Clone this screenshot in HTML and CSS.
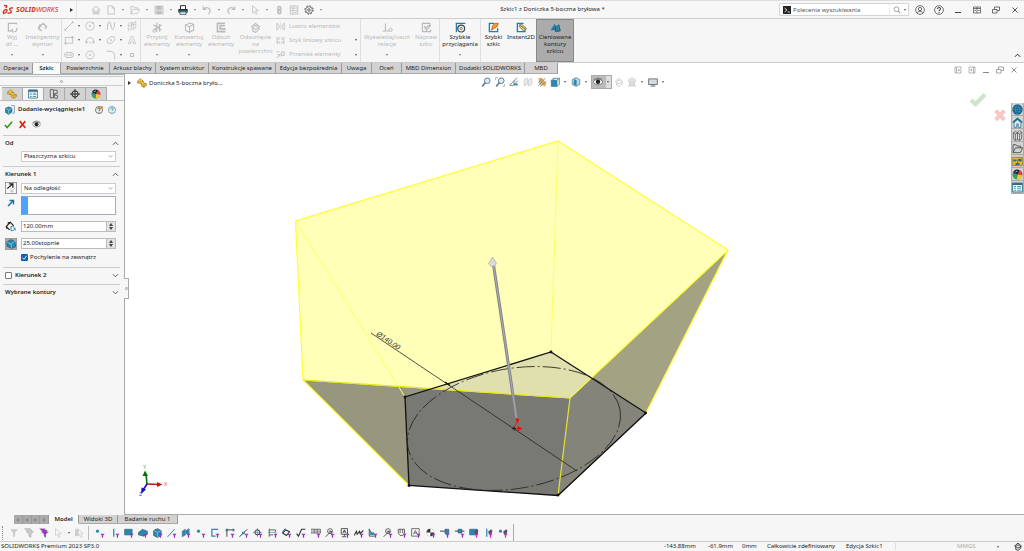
FILE: index.html
```html
<!DOCTYPE html>
<html lang="pl">
<head>
<meta charset="utf-8">
<title>Szkic1 z Doniczka 5-boczna bryłowa</title>
<link rel="stylesheet" href="styles.css">
</head>
<body>
<svg class="defs" aria-hidden="true">
  <defs>
    <symbol id="home" viewBox="0 0 16 16"><path d="M1 8l7-6 7 6M3.500 7v7.500h3.500v-4h2v4h3.500V7M5 7v6M11 7v6" fill="none" stroke="currentColor" stroke-width="1.300"/></symbol>
    <symbol id="page" viewBox="0 0 16 16"><path d="M3 1.500h7l3.500 3.500v9.500H3zM10 1.500V5h3.500" fill="none" stroke="currentColor" stroke-width="1.300"/></symbol>
    <symbol id="folder" viewBox="0 0 16 16"><path d="M1.500 14V2.500h4.500l1.500 2h5V7M1.500 14L5 7h10.500L12 14z" fill="none" stroke="currentColor" stroke-width="1.200"/></symbol>
    <symbol id="save" viewBox="0 0 16 16"><path d="M1.500 1.500h13v13h-13z" fill="#ddd" stroke="currentColor"/><path d="M4 1.500h8v6H4zM4 10h8v4.500H4z" fill="currentColor"/></symbol>
    <symbol id="print" viewBox="0 0 16 16"><path d="M4 7V1h8v6" fill="#fff" stroke="#222" stroke-width="1.500"/><path d="M.5 6.500h15V12H.5z" fill="#222"/><path d="M2 9h12v3H2z" fill="#2c9bc4"/><path d="M3 11h10v4H3z" fill="#dff0f8" stroke="#222"/></symbol>
    <symbol id="undo" viewBox="0 0 16 16"><path d="M2 2v5h5M2 7c3-4 11-4 11 3 0 2-1 3-3 4" fill="none" stroke="currentColor" stroke-width="1.800"/></symbol>
    <symbol id="redo" viewBox="0 0 16 16"><path d="M14 2v5H9M14 7C11 3 3 3 3 10c0 2 1 3 3 4" fill="none" stroke="currentColor" stroke-width="1.800"/></symbol>
    <symbol id="cursor" viewBox="0 0 16 16"><path d="M4 1v12l3-3 2.500 5 2-1L9 9h4.500z" fill="none" stroke="currentColor" stroke-width="1.200"/></symbol>
    <symbol id="rebuild" viewBox="0 0 16 16"><rect x="5" y="1" width="7" height="14" rx="3.500" fill="currentColor"/><circle cx="8.500" cy="5" r="1.700" fill="#ddd"/><circle cx="8.500" cy="11" r="1.700" fill="#ddd"/></symbol>
    <symbol id="props" viewBox="0 0 16 16"><path d="M2 1.500h12v13H2zM6.500 1.500v13M2 5h12M2 9h12M9 12h3" fill="none" stroke="currentColor" stroke-width="1.300"/></symbol>
    <symbol id="gear" viewBox="0 0 16 16"><circle cx="8" cy="8" r="6.600" fill="none" stroke="currentColor" stroke-width="1.600" stroke-dasharray="2.600 2.580"/><circle cx="8" cy="8" r="5.300" fill="none" stroke="currentColor"/><circle cx="8" cy="8" r="2" fill="none" stroke="currentColor" stroke-width="1.300"/></symbol>
    <symbol id="lens" viewBox="0 0 16 16"><circle cx="7" cy="6.500" r="4.800" fill="none" stroke="currentColor" stroke-width="1.300"/><path d="M10.500 10l4 4.500" stroke="currentColor" stroke-width="2"/></symbol>
    <symbol id="user" viewBox="0 0 16 16"><g fill="none" stroke="currentColor" stroke-width="1.200"><circle cx="8" cy="8" r="7"/><circle cx="8" cy="6.500" r="2.700"/><path d="M3.500 13c1-4 8-4 9 0"/></g></symbol>
    <symbol id="help" viewBox="0 0 16 16"><g fill="none" stroke="currentColor" stroke-width="1.200"><circle cx="8" cy="8" r="7"/><path d="M5.500 6.500c0-3.500 5-3 5-.5 0 2-2.500 1.500-2.500 4M8 11.500v1.500" stroke-width="1.700"/></g></symbol>
    <symbol id="min" viewBox="0 0 16 16"><path d="M2 13h12" stroke="currentColor" stroke-width="2"/></symbol>
    <symbol id="span" viewBox="0 0 16 16"><path d="M1 2h14v12H1zM8 2v12M1 5h14M3 9h3M10 9h3" fill="none" stroke="currentColor" stroke-width="1.400"/></symbol>
    <symbol id="restore" viewBox="0 0 16 16"><path d="M1 7h9v7H1zM5 7V2h10v7h-5" fill="none" stroke="currentColor" stroke-width="1.500"/></symbol>
    <symbol id="close" viewBox="0 0 16 16"><path d="M3 3l10 10M13 3L3 13" stroke="currentColor" stroke-width="1.800"/></symbol>
    <symbol id="up" viewBox="0 0 16 16"><path d="M2 11l6-6 6 6" fill="none" stroke="currentColor" stroke-width="2.200"/></symbol>
    <symbol id="down" viewBox="0 0 16 16"><path d="M2 5l6 6 6-6" fill="none" stroke="currentColor" stroke-width="2.200"/></symbol>
    <symbol id="exit" viewBox="0 0 16 16"><path d="M14 3.500V2H2v11h6M11 14.500c3-1 4-3 3-6M8 10l-1 3 3 2" fill="none" stroke="currentColor" stroke-width="1.800"/></symbol>
    <symbol id="dim" viewBox="0 0 16 16"><path d="M2 9l7-7 5 5-3 3M2 9l3 3M5 3.500L2 9l5 4" fill="none" stroke="currentColor" stroke-width="2"/></symbol>
    <symbol id="line" viewBox="0 0 16 16"><path d="M2 14L14 2" stroke="currentColor" stroke-width="1.300"/><circle cx="2" cy="14" r="1.500" fill="currentColor"/><circle cx="14" cy="2" r="1.500" fill="currentColor"/></symbol>
    <symbol id="circ" viewBox="0 0 16 16"><circle cx="8" cy="8" r="6.500" fill="none" stroke="currentColor" stroke-width="1.200"/><circle cx="8" cy="8" r="1.500" fill="currentColor"/><circle cx="13" cy="3" r="1.500" fill="currentColor"/></symbol>
    <symbol id="spline" viewBox="0 0 16 16"><path d="M2 14C3-4 7 0 8 8s5 8 6-6" fill="none" stroke="currentColor" stroke-width="1.500"/></symbol>
    <symbol id="plane" viewBox="0 0 16 16"><path d="M2 4l5-2v10l-5 3zM7 4l7-3v10l-7 3M2 8l12-3M10 2v11" fill="none" stroke="currentColor"/></symbol>
    <symbol id="rect" viewBox="0 0 16 16"><path d="M2 4h12v9H2z" fill="none" stroke="currentColor" stroke-width="1.300"/><path d="M1 12h3v3H1zM12 2h3v3h-3z" fill="currentColor"/></symbol>
    <symbol id="arc" viewBox="0 0 16 16"><path d="M2 11C1 2 15 2 14 11" fill="none" stroke="currentColor" stroke-width="1.400"/><path d="M1 10h3v3H1zM12 10h3v3h-3zM7 11h2v2H7z" fill="currentColor"/></symbol>
    <symbol id="ellipse" viewBox="0 0 16 16"><ellipse cx="8" cy="8" rx="7" ry="4.500" transform="rotate(-40 8 8)" fill="none" stroke="currentColor" stroke-width="1.200"/><circle cx="8" cy="8" r="1.400" fill="currentColor"/></symbol>
    <symbol id="letter" viewBox="0 0 16 16"><path d="M2 14L7 2h2l5 12h-3l-1-3H6l-1 3zM7 8h2" fill="none" stroke="currentColor"/></symbol>
    <symbol id="slot" viewBox="0 0 16 16"><rect x="1" y="4" width="14" height="8" rx="4" fill="none" stroke="currentColor" stroke-width="1.400"/><path d="M5 6v4M11 6v4M4 8h8" stroke="currentColor"/></symbol>
    <symbol id="poly" viewBox="0 0 16 16"><path d="M4.500 2h7L15 8l-3.500 6h-7L1 8z" fill="none" stroke="currentColor" stroke-width="1.200"/><circle cx="8" cy="8" r="1.500" fill="currentColor"/></symbol>
    <symbol id="fillet" viewBox="0 0 16 16"><path d="M1 2h5c5 0 8 3 8 8v5" fill="none" stroke="currentColor" stroke-width="1.400"/></symbol>
    <symbol id="point" viewBox="0 0 16 16"><path d="M5.500 5.500h5v5h-5z" fill="none" stroke="currentColor" stroke-width="1.600"/></symbol>
    <symbol id="trim" viewBox="0 0 16 16"><path d="M2 4l12 8M14 4L2 12M7 1v14M11 3v11" stroke="currentColor" stroke-width="1.600"/><circle cx="3" cy="13" r="2" fill="none" stroke="currentColor"/></symbol>
    <symbol id="cube" viewBox="0 0 16 16"><path d="M2 4.500L9 1.500l5 2v8.500l-6 3-6-3zM2 4.500l6 2.500v8M8 7l6-3.500" fill="none" stroke="currentColor" stroke-width="1.500"/></symbol>
    <symbol id="offset" viewBox="0 0 16 16"><path d="M13 2H2v12h12M13 5.500H6V10h8" fill="none" stroke="currentColor" stroke-width="2.200"/></symbol>
    <symbol id="surf" viewBox="0 0 16 16"><path d="M2 7l6-5 6 5-6 4zM4 9v4l4 2 5-4V8M5 7l3-2 3 2" fill="none" stroke="currentColor" stroke-width="1.500"/></symbol>
    <symbol id="mirror" viewBox="0 0 16 16"><path d="M1.500 2v12l4-4V6zM14.500 2v12l-4-4V6z" fill="none" stroke="currentColor" stroke-width="1.400"/><path d="M8 1v14" stroke="currentColor" stroke-dasharray="2 1.500"/></symbol>
    <symbol id="pattern" viewBox="0 0 16 16"><path d="M2 2l5 5M7 2L2 7M9 2l5 5M14 2L9 7M2 9l5 5M7 9l-5 5M9 9l5 5M14 9l-5 5M2 2v12M14 2v12" fill="none" stroke="currentColor" stroke-width="1.300"/></symbol>
    <symbol id="scene" viewBox="0 0 16 16"><path d="M2 7c1-7 11-7 12 0l-2 2v5H4V9zM1 14h14M5 7h6v4H5z" fill="#e8e8e8" stroke="currentColor" stroke-width="1.300"/></symbol>
    <symbol id="move" viewBox="0 0 16 16"><path d="M1 14l6-6M3 8h4v4M9.500 3.500h5v6h-5zM1 3h5" fill="none" stroke="currentColor" stroke-width="1.500"/></symbol>
    <symbol id="relation" viewBox="0 0 16 16"><path d="M5 2v11M1 13h9" fill="none" stroke="currentColor" stroke-width="1.600"/><circle cx="12.500" cy="11.500" r="2.300" fill="none" stroke="currentColor" stroke-width="1.400"/></symbol>
    <symbol id="repair" viewBox="0 0 16 16"><path d="M13 6V2H2v12h12v-3M5 10l8-6M5 6l3 6 6-7" fill="none" stroke="currentColor" stroke-width="1.700"/></symbol>
    <symbol id="snap" viewBox="0 0 16 16"><circle cx="9" cy="9.500" r="5" fill="none" stroke="#3c4348" stroke-width="1.700"/><circle cx="9" cy="9.500" r="1.800" fill="none" stroke="#3c4348"/><path d="M1 2h14M2 2v13" stroke="#247fa8" stroke-width="1.800"/></symbol>
    <symbol id="rapid" viewBox="0 0 16 16"><path d="M9 2H2v12h12V9" fill="none" stroke="#247fa8" stroke-width="2"/><path d="M5 12l2-7 3-3h5l-2 5-4 2z" fill="#f49b24" stroke="#b34117"/></symbol>
    <symbol id="instant" viewBox="0 0 16 16"><path d="M11 2H2v12h12" fill="none" stroke="#247fa8" stroke-width="2"/><path d="M5 4l3-1 7 6-1 3-3 1-6-6z" fill="#f0d36a" stroke="#496069"/><path d="M6 5l8 6" stroke="#333"/></symbol>
    <symbol id="contour" viewBox="0 0 16 16"><path d="M1 12L7 2l4 10z" fill="#1c7ba7"/><path d="M8 8l5-4 2 9-7 1z" fill="#397d9c" stroke="#0d526f"/></symbol>
    <symbol id="part" viewBox="0 0 16 16"><path d="M1 5l4-4 5 4 1 3 4 1v3l-4 3-4-2V9L1 8z" fill="#f5c844" stroke="#98711c"/><path d="M1 5l4 2 5-2M7 9l4 2 4-2M11 11v4" fill="none" stroke="#98711c" stroke-width=".8"/></symbol>
    <symbol id="pm" viewBox="0 0 16 16"><path d="M1 1.500h14v13H1z" fill="#fff" stroke="#245b7a" stroke-width="1.200"/><path d="M1 3h14" stroke="#245b7a" stroke-width="2.500"/><path d="M3 6.500h3M3 9h3M3 12h3M7.500 6.500H13M7.500 9H13M7.500 12H13" stroke="#2889ad" stroke-width="1.300"/></symbol>
    <symbol id="config" viewBox="0 0 16 16"><path d="M2 1h5v13H2zM8 2h5v5H8M9 9l5 2-1 4-5-1zM7 7l3 3" fill="#ddd" stroke="#555" stroke-width="1.400"/></symbol>
    <symbol id="target" viewBox="0 0 16 16"><circle cx="8" cy="8" r="5" fill="none" stroke="#222" stroke-width="1.600"/><path d="M8 0v16M0 8h16" stroke="#222" stroke-width="1.500"/></symbol>
    <symbol id="ball" viewBox="0 0 16 16"><circle cx="8" cy="8" r="7" fill="#2862b8"/><path d="M8 8L2 4a7 7 0 0 1 9-2z" fill="#222"/><path d="M8 8l3-6a7 7 0 0 1 4 7z" fill="#e93a2c"/><path d="M8 8l7 1a7 7 0 0 1-8 6z" fill="#f3cb30"/><path d="M8 8l-1 7a7 7 0 0 1-6-8z" fill="#3ca547"/><path d="M5 4l3-1" stroke="#fff"/></symbol>
    <symbol id="extrude" viewBox="0 0 16 16"><path d="M10 1h5v12h-4" fill="none" stroke="#477d9a"/><path d="M1 5l5-2 5 2v6l-5 4-5-3z" fill="#2787b0" stroke="#174a65"/><path d="M1 5l5 3 5-3M6 8v7" fill="none" stroke="#a8ddeb"/></symbol>
    <symbol id="ok" viewBox="0 0 16 16"><path d="M1.500 9l4 4.500L14.500 3" fill="none" stroke="currentColor" stroke-width="2.800"/></symbol>
    <symbol id="x" viewBox="0 0 16 16"><path d="M3 2l10 12M13 2L3 14" fill="none" stroke="currentColor" stroke-width="2.800"/></symbol>
    <symbol id="ok-bold" viewBox="0 0 16 16"><path d="M1 9l4.500 4L15 3.500" fill="none" stroke="currentColor" stroke-width="4.200"/></symbol>
    <symbol id="x-bold" viewBox="0 0 16 16"><path d="M3 3l10 10.500M13 3L3 13.500" fill="none" stroke="currentColor" stroke-width="4.600"/></symbol>
    <symbol id="eye" viewBox="0 0 16 16"><path d="M0 8c4-6 12-6 16 0-4 6-12 6-16 0z" fill="#f5f5f5" stroke="#555"/><circle cx="8" cy="7.500" r="3.500" fill="#222"/><path d="M1 5c3-4 11-4 14 0" fill="none" stroke="#444"/></symbol>
    <symbol id="flip" viewBox="0 0 16 16"><path d="M2 9l8-7M5 1.500h6v6" fill="none" stroke="#222" stroke-width="2"/><path d="M14 8l-6 6M8 10v4h4" fill="none" stroke="#bbb" stroke-width="1.500"/></symbol>
    <symbol id="dir" viewBox="0 0 16 16"><path d="M2 14L12 4M5 3h8v8" fill="none" stroke="#167195" stroke-width="2.700"/></symbol>
    <symbol id="depth" viewBox="0 0 16 16"><path d="M1 8l6-6 5 5M1 8l5 5M4 5L1 8l1 3M7 2L3 3" fill="none" stroke="#222" stroke-width="1.600"/><path d="M8 8h2c4 0 4 6 0 6H8zM14 14v-4" fill="none" stroke="#2483a6" stroke-width="1.300"/></symbol>
    <symbol id="draft" viewBox="0 0 16 16"><path d="M1 5l7-4 6 3 2 8-7 3-7-3z" fill="#2689b2" stroke="#164e68"/><path d="M1 5l7 3 6-4M8 8l1 7" fill="none" stroke="#9bd6e9" stroke-width="1.100"/></symbol>
    <symbol id="zoomfit" viewBox="0 0 16 16"><circle cx="10" cy="6" r="4.500" fill="#d9edf6" stroke="#687f8d" stroke-width="1.600"/><path d="M7 9l-5 6" stroke="#687f8d" stroke-width="2.500"/></symbol>
    <symbol id="prev" viewBox="0 0 16 16"><path d="M13 1L5 9l-4 4 5 1 8-8M10 5L7 8l3 3" fill="none" stroke="#66828f" stroke-width="1.500"/><path d="M7 12h7" stroke="#278fb7" stroke-width="3"/></symbol>
    <symbol id="section" viewBox="0 0 16 16"><path d="M2 4l5-2v10l-5 2zM9 4l5-2v10l-5 2z" fill="#eee" stroke="#ccc" stroke-width="1.400"/></symbol>
    <symbol id="brush" viewBox="0 0 16 16"><path d="M2 2l5-1 8 9-2 5-9-4z" fill="#eda84a"/><path d="M2 14L13 2M5 15L15 7M2 9l6-6" stroke="#728e98" stroke-width="1.500"/></symbol>
    <symbol id="bluecube" viewBox="0 0 16 16"><path d="M2 5l4-3h9v10l-4 3H2z" fill="#d9e9ee" stroke="#35616d"/><path d="M2 5h9v10H2z" fill="#2689b2"/><path d="M11 5l4-3M11 5v10M6 2v5" stroke="#35616d"/></symbol>
    <symbol id="display" viewBox="0 0 16 16"><path d="M2 4l6-3 6 3v8l-6 3-6-3z" fill="#b6dae8" stroke="#44616b"/><path d="M5 3l4 2v9l-5-2z" fill="#2689b2"/></symbol>
    <symbol id="monitor" viewBox="0 0 16 16"><path d="M1 3h14v9H1z" fill="#d6dadd" stroke="#65717a" stroke-width="1.500"/><path d="M8 12v2M4 14.500h8" stroke="#65717a" stroke-width="1.600"/></symbol>
    <symbol id="dock" viewBox="0 0 16 16"><path d="M2 2h12v12H2zM5 2v12M10 6L8 8l2 2z" fill="none" stroke="currentColor" stroke-width="1.200"/></symbol>
    <symbol id="globe" viewBox="0 0 16 16"><circle cx="8" cy="8" r="7.500" fill="#16658d"/><path d="M2 4c4 2 8 2 12 0M1 8h14M3 12c3-2 7-2 10 0M8 1c-4 4-4 10 0 14M8 1c4 4 4 10 0 14" fill="none" stroke="#61acd0" stroke-width=".6"/></symbol>
    <symbol id="bluehome" viewBox="0 0 16 16"><path d="M1 8l7-6 7 6" fill="none" stroke="#186387" stroke-width="2"/><path d="M3 8l5-4 5 4v7H9v-5H7v5H3z" fill="#d6edf7" stroke="#186387"/></symbol>
    <symbol id="library" viewBox="0 0 16 16"><path d="M2 4l3-2 3 2v10l-3 1-3-2zM8 4l3-3 3 2v10l-3 2-3-1M2 4l3 2 3-2 3 2 3-3M5 6v9M11 6v9" fill="#ddd" stroke="#444"/></symbol>
    <symbol id="palette" viewBox="0 0 16 16"><path d="M1 2h14v12H1z" fill="#f4bd31" stroke="#826522"/><path d="M2 5h4v3H2zM9 4h5v4H9zM5 10h6v3H5z" fill="#316b87"/><path d="M6 6h3M8 8v2" stroke="#333"/></symbol>
    <symbol id="funnel" viewBox="0 0 16 16"><path d="M2 2h12L9.500 8v6h-3V8z" fill="currentColor"/></symbol>
    <symbol id="funnels" viewBox="0 0 16 16"><path d="M1 1h9l-1 2h4l-1 3h3l-4 4v5l-3-2v-3L4 6h2z" fill="currentColor" stroke="#888" stroke-width=".6"/></symbol>
    <symbol id="mini" viewBox="0 0 16 16"><path d="M8.500 9h7l-2.500 3v3.500h-2V12z" fill="#9a35c4"/></symbol>
    <symbol id="fpoint" viewBox="0 0 16 16"><circle cx="4" cy="5" r="2.500" fill="#2689b2"/></symbol>
    <symbol id="fedge" viewBox="0 0 16 16"><path d="M6 1v13" stroke="#2689b2" stroke-width="2"/></symbol>
    <symbol id="fface" viewBox="0 0 16 16"><path d="M1 2h12v9H1z" fill="#2689b2" stroke="#315d6d"/></symbol>
    <symbol id="fsurf" viewBox="0 0 16 16"><path d="M0 8l7-6 8 3v5l-6 3-8-2z" fill="#2689b2" stroke="#315d6d"/></symbol>
    <symbol id="fsolid" viewBox="0 0 16 16"><path d="M1 4l6-3 6 3v8l-6 3-6-3z" fill="#2689b2" stroke="#25495a"/><path d="M1 4l6 3 6-3M7 7v8" fill="none" stroke="#a7d9e8"/></symbol>
    <symbol id="faxis" viewBox="0 0 16 16"><path d="M1 14L12 2" stroke="#2689b2" stroke-width="1.600"/></symbol>
    <symbol id="fplane" viewBox="0 0 16 16"><path d="M2 5l5-3v9l-5 3zM8 4l5-3v8H8z" fill="#2689b2" stroke="#55717e"/></symbol>
    <symbol id="fsketch" viewBox="0 0 16 16"><path d="M13 2H3v11h6" fill="none" stroke="#2689b2" stroke-width="2"/></symbol>
    <symbol id="fseg" viewBox="0 0 16 16"><path d="M3 14V3h11" fill="none" stroke="#444" stroke-width="1.500"/><path d="M1 1h4v4H1zM12 1h3v4h-3z" fill="#397b91"/></symbol>
    <symbol id="fmid" viewBox="0 0 16 16"><path d="M1 14L13 2" stroke="#444" stroke-width="1.600"/><path d="M5 6h4v4H5z" fill="#2689b2"/></symbol>
    <symbol id="fcenter" viewBox="0 0 16 16"><path d="M7 0v14M0 7h14" stroke="#2689b2"/><circle cx="7" cy="7" r="4" fill="none" stroke="#333" stroke-width="1.600"/></symbol>
    <symbol id="fcl" viewBox="0 0 16 16"><path d="M2 1v13M2 3h10v3M2 11h6" fill="none" stroke="#444" stroke-width="1.300"/><path d="M0 7h14" stroke="#2689b2"/></symbol>
    <symbol id="fdim" viewBox="0 0 16 16"><path d="M1 8l5-5 6 3-5 6z" fill="none" stroke="#333" stroke-width="1.800"/><path d="M1 6l5-5" stroke="#2689b2" stroke-width="2"/></symbol>
    <symbol id="frough" viewBox="0 0 16 16"><path d="M1 9l3 4L9 2h6" fill="none" stroke="#333" stroke-width="1.800"/></symbol>
    <symbol id="fgtol" viewBox="0 0 16 16"><path d="M0 2h15v6H0zM5 2v6M10 2v6M2 5h2M6 5h3M11 5h3" fill="none" stroke="#444" stroke-width="1.200"/></symbol>
    <symbol id="fnote" viewBox="0 0 16 16"><circle cx="8" cy="5" r="4" fill="none" stroke="#444" stroke-width="1.200"/><path d="M1 14l9-9M6 5h4v4" fill="none" stroke="#444" stroke-width="1.400"/></symbol>
    <symbol id="fdatum" viewBox="0 0 16 16"><path d="M2 1h10v9H2zM7 10v3M3 14h7M4.500 8L7 3l2.500 5M5.500 6h3" fill="none" stroke="#333" stroke-width="1.300"/></symbol>
    <symbol id="fframe" viewBox="0 0 16 16"><path d="M1 1h12v12H1zM4 10l3-6 3 6M5 8h4" fill="none" stroke="#555" stroke-width="1.300"/></symbol>
    <symbol id="fweld" viewBox="0 0 16 16"><path d="M0 12l4-7 1 5 4-5 1 4 5-5" fill="none" stroke="#333" stroke-width="1.700"/></symbol>
    <symbol id="ftri" viewBox="0 0 16 16"><path d="M2 1v12h10M2 2l5 8" fill="none" stroke="#444" stroke-width="1.400"/><path d="M3 7h7v4H3z" fill="#2689b2"/></symbol>
    <symbol id="fblock" viewBox="0 0 16 16"><path d="M2 2h10v6l-3 4H5L2 8zM5 2v6M9 2v6" fill="none" stroke="#555" stroke-width="1.400"/></symbol>
    <symbol id="fcog" viewBox="0 0 16 16"><circle cx="7" cy="7" r="6" fill="#333"/><path d="M7 7V1a6 6 0 0 1 6 6zM7 7v6a6 6 0 0 1-6-6z" fill="#fff"/></symbol>
    <symbol id="froute" viewBox="0 0 16 16"><path d="M0 5h8" stroke="#333" stroke-width="1.500"/><path d="M8 2h6v7H8z" fill="#2689b2" stroke="#33505d"/></symbol>
    <symbol id="froute2" viewBox="0 0 16 16"><path d="M0 5h15" stroke="#333" stroke-width="1.500"/><path d="M5 2h6v6H5z" fill="#2689b2" stroke="#33505d"/></symbol>
    <symbol id="fmesh" viewBox="0 0 16 16"><path d="M8 6l5-4 2 2-1 5-4 1z" fill="#555"/><path d="M8.500 9h7l-2.500 3v3.500h-2V12z" fill="#e21be4"/></symbol>
  </defs>
</svg>

<header class="titlebar">
  <div class="brand">
    <svg class="brand-mark" viewBox="0 0 24 22" aria-hidden="true"><g fill="none" stroke="#dc2b25" stroke-width="2.600"><path d="M4 3c6 0 8 1 3 5M2 18c2-8 8-8 8-5s-4 6-8 6M22 8c-6-1-9 2-5 5s1 6-6 5"/></g></svg>
    <span class="brand-name"><b>SOLID</b>WORKS</span>
  </div>
  <button class="menu-arrow" aria-label="Menu"><i class="caret-right"></i></button>
  <nav class="quick" aria-label="Szybki dostęp">
    <button class="solo" aria-label="Strona główna"><svg><use href="#home"/></svg></button>
    <button aria-label="Nowy"><svg><use href="#page"/></svg><i class="caret"></i></button>
    <button aria-label="Otwórz"><svg><use href="#folder"/></svg><i class="caret"></i></button>
    <button aria-label="Zapisz"><svg><use href="#save"/></svg><i class="caret"></i></button>
    <button class="on" aria-label="Drukuj"><svg><use href="#print"/></svg><i class="caret"></i></button>
    <button aria-label="Cofnij"><svg><use href="#undo"/></svg><i class="caret"></i></button>
    <button aria-label="Ponów"><svg><use href="#redo"/></svg><i class="caret"></i></button>
    <button aria-label="Wybierz"><svg><use href="#cursor"/></svg><i class="caret"></i></button>
    <button class="solo" aria-label="Przebuduj"><svg><use href="#rebuild"/></svg></button>
    <button class="solo" aria-label="Właściwości"><svg><use href="#props"/></svg></button>
    <button class="on" aria-label="Opcje"><svg><use href="#gear"/></svg><i class="caret"></i></button>
  </nav>
  <h1 class="doc-title">Szkic1 z Doniczka 5-boczna bryłowa *</h1>
  <div class="search">
    <span class="prompt"><svg viewBox="0 0 16 16"><path d="M3 4l5 4-5 4M9 12h5" fill="none" stroke="#fff" stroke-width="1.600"/></svg></span>
    <input type="text" aria-label="Polecenia wyszukiwania" placeholder="Polecenia wyszukiwania">
    <button aria-label="Szukaj"><svg><use href="#lens"/></svg><i class="caret"></i></button>
  </div>
  <div class="window-buttons">
    <button aria-label="Konto"><svg class="big"><use href="#user"/></svg></button>
    <button aria-label="Pomoc"><svg class="big"><use href="#help"/></svg></button>
    <button aria-label="Minimalizuj"><svg><use href="#min"/></svg></button>
    <button aria-label="Rozciągnij"><svg><use href="#span"/></svg></button>
    <button aria-label="Przywróć"><svg><use href="#restore"/></svg></button>
    <button aria-label="Zamknij"><svg><use href="#close"/></svg></button>
  </div>
</header>

<section class="ribbon" aria-label="Szkic">
  <div class="group g-sketch">
    <button class="tool" disabled><svg><use href="#exit"/></svg><span>Wyj<br>dź ...</span><i class="caret"></i></button>
    <button class="tool" disabled><svg><use href="#dim"/></svg><span>Inteligentny<br>wymiar</span><i class="caret"></i></button>
  </div>
  <div class="group shapes">
    <button disabled aria-label="Linia"><svg><use href="#line"/></svg><i class="caret"></i></button>
    <button disabled aria-label="Okrąg"><svg><use href="#circ"/></svg><i class="caret"></i></button>
    <button disabled aria-label="Splajn"><svg><use href="#spline"/></svg><i class="caret"></i></button>
    <button disabled aria-label="Płaszczyzna"><svg><use href="#plane"/></svg></button>
    <button disabled aria-label="Prostokąt"><svg><use href="#rect"/></svg><i class="caret"></i></button>
    <button disabled aria-label="Łuk"><svg><use href="#arc"/></svg><i class="caret"></i></button>
    <button disabled aria-label="Elipsa"><svg><use href="#ellipse"/></svg><i class="caret"></i></button>
    <button disabled aria-label="Tekst"><svg><use href="#letter"/></svg></button>
    <button disabled aria-label="Rowek"><svg><use href="#slot"/></svg><i class="caret"></i></button>
    <button disabled aria-label="Wielokąt"><svg><use href="#poly"/></svg></button>
    <button disabled aria-label="Zaokrąglenie"><svg><use href="#fillet"/></svg><i class="caret"></i></button>
    <button disabled aria-label="Punkt"><svg><use href="#point"/></svg></button>
  </div>
  <div class="group g-edit">
    <button class="tool" disabled><svg><use href="#trim"/></svg><span>Przytnij<br>elementy</span><i class="caret"></i></button>
    <button class="tool" disabled><svg><use href="#cube"/></svg><span>Konwertuj<br>elementy</span><i class="caret"></i></button>
    <button class="tool" disabled><svg><use href="#offset"/></svg><span>Odsuń<br>elementy</span></button>
    <button class="tool wide" disabled><svg><use href="#surf"/></svg><span>Odsunięcie<br>na<br>powierzchni</span></button>
    <div class="rows">
      <button disabled><svg><use href="#mirror"/></svg><span>Lustro elementów</span></button>
      <button disabled><svg><use href="#pattern"/></svg><span>Szyk liniowy szkicu</span><i class="caret"></i></button>
      <button disabled><svg><use href="#move"/></svg><span>Przenieś elementy</span><i class="caret"></i></button>
    </div>
  </div>
  <div class="group g-relations">
    <button class="tool wider" disabled><svg><use href="#relation"/></svg><span>Wyświetlaj/usuń<br>relacje</span><i class="caret"></i></button>
    <button class="tool" disabled><svg><use href="#repair"/></svg><span>Napraw<br>szkic</span></button>
  </div>
  <div class="group g-snap">
    <button class="tool"><svg><use href="#snap"/></svg><span>Szybkie<br>przyciągania</span><i class="caret"></i></button>
  </div>
  <div class="group g-rapid">
    <button class="tool"><svg><use href="#rapid"/></svg><span>Szybki<br>szkic</span></button>
    <button class="tool instant"><svg><use href="#instant"/></svg><span>Instant2D</span></button>
    <button class="tool pressed" aria-pressed="true"><svg><use href="#contour"/></svg><span>Cieniowane<br>kontury<br>szkicu</span></button>
  </div>
  <button class="collapse" aria-label="Zwiń wstążkę"><svg><use href="#up"/></svg></button>
</section>

<div class="tab-row">
  <nav class="tabs" aria-label="Karty poleceń">
    <button class="w33">Operacje</button><button class="w28 current">Szkic</button><button class="w49">Powierzchnie</button><button class="w46">Arkusz blachy</button><button class="w53">System struktur</button><button class="w67">Konstrukcje spawane</button><button class="w66">Edycja bezpośrednia</button><button class="w30">Uwaga</button><button class="w30">Oceń</button><button class="w54">MBD Dimension</button><button class="w69">Dodatki SOLIDWORKS</button><button class="w33">MBD</button>
  </nav>
  <div class="mdi">
    <button aria-label="Lewy panel"><svg><use href="#dock"/></svg></button>
    <button class="mirrored" aria-label="Prawy panel"><svg><use href="#dock"/></svg></button>
    <button aria-label="Minimalizuj dokument"><svg><use href="#min"/></svg></button>
    <button aria-label="Przywróć dokument"><svg><use href="#restore"/></svg></button>
    <button aria-label="Zamknij dokument"><svg><use href="#close"/></svg></button>
  </div>
</div>

<main class="work">
  <aside class="panel">
    <div class="grip"><i></i></div>
    <nav class="panel-tabs" aria-label="Menedżery">
      <button aria-label="Drzewo operacji"><svg><use href="#part"/></svg></button>
      <button class="current" aria-label="Właściwości"><svg><use href="#pm"/></svg></button>
      <button aria-label="Konfiguracje"><svg><use href="#config"/></svg></button>
      <button aria-label="Wymiary"><svg><use href="#target"/></svg></button>
      <button aria-label="Wygląd"><svg><use href="#ball"/></svg></button>
    </nav>
    <div class="feature">
      <svg class="feature-icon"><use href="#extrude"/></svg>
      <h2>Dodanie-wyciągnięcie1</h2>
      <button aria-label="Co nowego"><svg viewBox="0 0 16 16"><use href="#help"/><circle cx="13" cy="3" r="3" fill="#e88a3a"/></svg></button>
      <button class="blue" aria-label="Pomoc"><svg><use href="#help"/></svg></button>
    </div>
    <div class="confirm">
      <button class="green" aria-label="OK"><svg><use href="#ok"/></svg></button>
      <button class="red" aria-label="Anuluj"><svg><use href="#x"/></svg></button>
      <button aria-label="Podgląd"><svg><use href="#eye"/></svg></button>
    </div>
    <section class="block b-from">
      <h3><label for="from">Od</label><svg><use href="#up"/></svg></h3>
      <div class="field"><span></span><select id="from"><option>Płaszczyzna szkicu</option></select></div>
    </section>
    <section class="block b-dir">
      <h3><span>Kierunek 1</span><svg><use href="#up"/></svg></h3>
      <div class="field"><button class="boxed" aria-label="Odwróć kierunek"><svg><use href="#flip"/></svg></button><select aria-label="Warunek końcowy"><option>Na odległość</option></select></div>
      <div class="field list"><svg><use href="#dir"/></svg><div class="listbox" role="listbox" aria-label="Kierunek wyciągnięcia" tabindex="0"></div></div>
      <div class="field spin"><svg class="large"><use href="#depth"/></svg><div class="spinner"><input type="text" aria-label="Głębokość" value="120.00mm"><span><button class="inc" aria-label="Więcej"></button><button class="dec" aria-label="Mniej"></button></span></div></div>
      <div class="field spin"><button class="boxed active" aria-label="Pochylenie"><svg><use href="#draft"/></svg></button><div class="spinner"><input type="text" aria-label="Kąt pochylenia" value="25.00stopnie"><span><button class="inc" aria-label="Większy"></button><button class="dec" aria-label="Mniejszy"></button></span></div></div>
      <label class="check"><input type="checkbox" checked>Pochylenie na zewnątrz</label>
    </section>
    <section class="block b-small"><h3><label><input type="checkbox">Kierunek 2</label><svg><use href="#down"/></svg></h3></section>
    <section class="block b-small"><h3><span>Wybrane kontury</span><svg><use href="#down"/></svg></h3></section>
    <button class="panel-handle" aria-label="Zwiń panel"><i></i></button>
  </aside>

  <section class="stage" aria-label="Obszar graficzny">
    <svg class="model" viewBox="125 74 899 440" role="img" aria-label="Podgląd wyciągnięcia doniczki">
      <defs>
        <clipPath id="base"><path d="M551 352L646 413 558 495.500 409 485.500 405 397z"/></clipPath>
      </defs>
      <path d="M558 141L728 250 570 398 303 380 295.500 221z" fill="#ffffb8"/>
      <path d="M303 380L570 398 558 495.500 409 485.500z" fill="#979780"/>
      <path d="M570 398L728 250 646 413 558 495.500z" fill="#a3a384"/>
      <g clip-path="url(#base)">
        <path d="M558 141L728 250 570 398 303 380 295.500 221z" fill="#e0e0ae"/>
        <path d="M303 380L570 398 558 495.500 409 485.500z" fill="#797974"/>
        <path d="M570 398L728 250 646 413 558 495.500z" fill="#84847b"/>
      </g>
      <path d="M558 141L551 352M295.500 221L405 397" stroke="#ffff6a" fill="none"/>
      <path d="M558 141L728 250 570 398 303 380 295.500 221zM303 380L409 485.500M728 250L646 413" stroke="#ffff30" stroke-width="1.200" fill="none"/>
      <path d="M303 380L570 398 558 495.500" stroke="#e3e32e" stroke-width="1.200" fill="none"/>
      <path d="M551 352L646 413 558 495.500 409 485.500 405 397z" stroke="#111" stroke-width="1.300" fill="none"/>
      <g fill="#111"><circle cx="551" cy="352" r="1.400"/><circle cx="645.500" cy="413" r="1.400"/><circle cx="558" cy="495" r="1.400"/><circle cx="409" cy="485.500" r="1.400"/><circle cx="405" cy="397" r="1.400"/></g>
      <ellipse cx="514" cy="428.500" rx="107.700" ry="60" transform="rotate(-10 514 428.500)" fill="none" stroke="#222" stroke-width=".8" stroke-dasharray="18 3 2 3"/>
      <path d="M371 333L577 471" stroke="#222" stroke-width=".8"/>
      <path d="M445 382l5 3.500" stroke="#111" stroke-width="1.500"/>
      <text class="dimension" transform="translate(376 335) rotate(34)">Ø140.00</text>
      <path d="M492 265l3-.5 23 154-3 .5z" fill="#85858d"/><path d="M493.500 265l23 153" stroke="#bbbbc2" stroke-width=".7"/>
      <path d="M492.500 257l4 6-1.500 3-4 .5-2.500-3z" fill="#d8d8da" stroke="#999" stroke-width=".5"/>
      <path d="M514 428l4-8M516 418.500l3 1-1.500 3zM514 428.500h5M518 426.500l3.500 2-3.500 2z" stroke="#f00a0a" fill="#f00a0a" stroke-width=".8"/>
      <path d="M512 428.500h4M514 426.500v4" stroke="#222"/>
      <g stroke-width="1.600"><path d="M147 484l-1-10" stroke="#087008"/><path d="M142.500 476l2.500-5.500 3 5.500z" fill="#087008"/><path d="M147 484l12 .5" stroke="#c71313"/><path d="M157 482l5.500 2.500-5.500 2.500z" fill="#c71313"/><path d="M147 484l-4 6" stroke="#1515bd"/><path d="M141.500 487.500l4.500 2-5 4.500z" fill="#1515bd"/></g>
      <g class="axis"><text x="143" y="469" fill="#2d8f2d">Y</text><text x="164" y="486" fill="#f05050">X</text><text x="139" y="496" fill="#3e3ed8">Z</text></g>
    </svg>
    <div class="tree"><i class="caret-right"></i><svg><use href="#part"/></svg><span>Doniczka 5-boczna bryło...</span></div>
    <div class="hud">
      <button aria-label="Dopasuj"><svg><use href="#zoomfit"/></svg></button>
      <button aria-label="Powiększ obszar"><svg viewBox="0 0 16 16"><use href="#zoomfit"/><path d="M1 5V1h4M12 15h3v-4" stroke="#888" fill="none"/></svg></button>
      <button aria-label="Poprzedni widok"><svg><use href="#prev"/></svg></button>
      <button aria-label="Przekrój"><svg><use href="#section"/></svg></button>
      <button aria-label="Styl"><svg><use href="#brush"/></svg></button>
      <button class="drop" aria-label="Orientacja"><svg><use href="#bluecube"/></svg><i class="caret"></i></button>
      <button class="drop" aria-label="Styl wyświetlania"><svg><use href="#display"/></svg><i class="caret"></i></button>
      <button class="drop hidden-items" aria-label="Ukryj lub pokaż"><svg><use href="#eye"/></svg><i class="caret"></i></button>
      <button class="faded" aria-label="Wygląd"><svg><use href="#surf"/></svg></button>
      <button class="drop faded" aria-label="Scena"><svg><use href="#scene"/></svg><i class="caret"></i></button>
      <button class="drop" aria-label="Ustawienia widoku"><svg><use href="#monitor"/></svg><i class="caret"></i></button>
    </div>
    <button class="corner-ok" aria-label="Zatwierdź"><svg><use href="#ok-bold"/></svg></button>
    <button class="corner-x" aria-label="Odrzuć"><svg><use href="#x-bold"/></svg></button>
    <nav class="taskpane" aria-label="Okienko zadań">
      <button aria-label="3DEXPERIENCE"><svg><use href="#globe"/></svg></button>
      <button aria-label="Zasoby"><svg><use href="#bluehome"/></svg></button>
      <button aria-label="Biblioteka"><svg><use href="#library"/></svg></button>
      <button aria-label="Eksplorator"><svg><use href="#folder"/></svg></button>
      <button aria-label="Paleta widoków"><svg><use href="#palette"/></svg></button>
      <button aria-label="Wyglądy"><svg><use href="#ball"/></svg></button>
      <button aria-label="Właściwości niestandardowe"><svg><use href="#pm"/></svg></button>
    </nav>
  </section>
</main>

<nav class="model-tabs" aria-label="Widoki dokumentu">
  <div class="nav-arrows"><button class="back" aria-label="Pierwszy"></button><button class="back" aria-label="Poprzedni"></button><button aria-label="Następny"></button><button aria-label="Ostatni"></button></div>
  <button class="w30 current">Model</button><button class="w39">Widoki 3D</button><button class="w60">Badanie ruchu 1</button>
</nav>

<div class="filters" role="toolbar" aria-label="Filtry wyboru">
  <i class="dots"></i>
  <div class="filter-modes">
    <button class="off" aria-label="Filtr"><svg><use href="#funnel"/></svg></button>
    <button class="off" aria-label="Wyczyść filtry"><svg><use href="#funnels"/></svg></button>
    <button class="purple" aria-label="Wszystkie filtry"><svg><use href="#funnels"/></svg></button>
    <button class="off" aria-label="Wybierz"><svg><use href="#cursor"/></svg></button>
    <i class="caret"></i>
    <button class="off" aria-label="Odwróć wybór"><svg viewBox="0 0 16 16"><use href="#cursor"/><path d="M0 2h6v11H0z" fill="#ccc"/></svg></button>
  </div>
  <div class="filter-types">
    <button aria-label="Wierzchołki"><svg><use href="#fpoint"/><use href="#mini"/></svg></button>
    <button aria-label="Krawędzie"><svg><use href="#fedge"/><use href="#mini"/></svg></button>
    <button aria-label="Ściany"><svg><use href="#fface"/><use href="#mini"/></svg></button>
    <button aria-label="Powierzchnie"><svg><use href="#fsurf"/><use href="#mini"/></svg></button>
    <button aria-label="Bryły"><svg><use href="#fsolid"/><use href="#mini"/></svg></button>
    <button aria-label="Osie"><svg><use href="#faxis"/><use href="#mini"/></svg></button>
    <button aria-label="Płaszczyzny"><svg><use href="#fplane"/><use href="#mini"/></svg></button>
    <button aria-label="Punkty szkicu"><svg><use href="#fpoint"/><use href="#mini"/></svg></button>
    <button aria-label="Szkice"><svg><use href="#fsketch"/><use href="#mini"/></svg></button>
    <button aria-label="Segmenty"><svg><use href="#fseg"/><use href="#mini"/></svg></button>
    <button aria-label="Punkty środkowe"><svg><use href="#fmid"/><use href="#mini"/></svg></button>
    <button aria-label="Znaczniki środka"><svg><use href="#fcenter"/><use href="#mini"/></svg></button>
    <button aria-label="Linie środkowe"><svg><use href="#fcl"/><use href="#mini"/></svg></button>
    <button aria-label="Wymiary"><svg><use href="#fdim"/><use href="#mini"/></svg></button>
    <button aria-label="Chropowatość"><svg><use href="#frough"/><use href="#mini"/></svg></button>
    <button aria-label="Tolerancje"><svg><use href="#fgtol"/><use href="#mini"/></svg></button>
    <button aria-label="Notatki"><svg><use href="#fnote"/><use href="#mini"/></svg></button>
    <button aria-label="Bazy"><svg><use href="#fdatum"/><use href="#mini"/></svg></button>
    <button aria-label="Spoiny"><svg><use href="#fweld"/><use href="#mini"/></svg></button>
    <button aria-label="Symbole spoin"><svg><use href="#ftri"/><use href="#mini"/></svg></button>
    <button aria-label="Cele baz"><svg><use href="#fnote"/><use href="#mini"/></svg></button>
    <button aria-label="Bloki"><svg><use href="#fblock"/><use href="#mini"/></svg></button>
    <button aria-label="Gwinty"><svg><use href="#fframe"/><use href="#mini"/></svg></button>
    <button aria-label="Środek masy"><svg><use href="#fcog"/><use href="#mini"/></svg></button>
    <button aria-label="Punkty połączeń"><svg><use href="#froute"/><use href="#mini"/></svg></button>
    <button aria-label="Punkty trasy"><svg><use href="#froute2"/><use href="#mini"/></svg></button>
    <button aria-label="Ścianki siatki"><svg><use href="#fface"/><use href="#fmesh"/></svg></button>
    <button aria-label="Krawędzie siatki"><svg><use href="#fedge"/><use href="#fmesh"/></svg></button>
    <button aria-label="Wierzchołki siatki"><svg><use href="#fpoint"/><use href="#fmesh"/></svg></button>
  </div>
</div>

<footer class="status">
  <span class="product">SOLIDWORKS Premium 2023 SP3.0</span>
  <span class="s-x">-143.88mm</span><span class="s-y">-61.9mm</span><span class="s-z">0mm</span><span class="s-def">Całkowicie zdefiniowany</span><span class="s-edit">Edycja Szkic1</span>
  <span class="s-units">MMGS</span><i class="caret"></i>
  <button aria-label="Znaczniki"><svg><use href="#surf"/></svg></button>
</footer>
</body>
</html>
```
FILE: styles.css
```css
* { box-sizing: border-box; }

body {
  margin: 0;
  min-height: 100vh;
  display: flex;
  flex-direction: column;
  background: #fff;
  color: #222;
  font: 6px/7px "Noto Sans", "Open Sans", sans-serif;
  overflow: hidden;
}

h1, h2, h3 { margin: 0; font-size: 6px; font-weight: 400; }
button, input, select { font: inherit; color: inherit; }
button { padding: 0; border: 0; background: none; white-space: nowrap; display: flex; align-items: center; justify-content: center; }
svg { width: 10px; height: 10px; flex: none; display: block; }
.defs { position: absolute; width: 0; height: 0; }

.caret { flex: none; width: 0; height: 0; border: 1px solid transparent; border-top: 2px solid #555; border-bottom: 0; }
.caret-right { width: 0; height: 0; border: 2px solid transparent; border-left: 3px solid #333; border-right: 0; }

/* Title bar */
.titlebar { display: flex; align-items: center; height: 19px; flex: none; background: #f7f7f7; border-top: 1px solid #ddd; border-bottom: 1px solid #ccc; }
.brand { width: 69px; padding-left: 2px; display: flex; align-items: center; gap: 2px; color: #dc2b25; }
.brand-mark { width: 12px; height: 11px; }
.brand-name { font: italic 7px/8px "Noto Sans", sans-serif; }
.menu-arrow { margin-left: 1px; }
.quick { display: flex; align-items: center; margin-left: 3px; padding-left: 14px; border-left: 1px solid #e4e4e4; height: 17px; color: #bdbdbd; }
.quick button { width: 24px; gap: 6px; justify-content: flex-start; }
.quick .caret { border-top-color: #888; }
.quick .solo { width: 15px; }
.quick .on { color: #444; }
.doc-title { flex: 1; text-align: center; padding-right: 2px; }
.search { display: flex; align-items: center; width: 130px; height: 13px; padding-left: 3px; background: #fff; border: 1px solid #d4d4d4; border-radius: 1px; }
.prompt { width: 8px; height: 8px; background: #222; flex: none; }
.prompt svg { width: 8px; height: 8px; }
.search input { flex: 1; min-width: 0; border: 0; padding: 0 2px; outline: 0; height: 11px; }
.search input::placeholder { color: #555; opacity: 1; }
.search button { width: 19px; height: 11px; gap: 3px; border-left: 1px solid #eee; color: #777; }
.search svg { width: 8px; height: 8px; }
.window-buttons { display: flex; margin-left: 1px; width: 114px; }
.window-buttons button { flex: 1; color: #444; }
.window-buttons svg { width: 8px; height: 8px; }
.window-buttons .big { width: 10px; height: 10px; }

/* Ribbon */
.ribbon { display: flex; height: 44px; flex: none; background: #f6f6f6; border-bottom: 1px solid #ccc; }
.group { display: flex; border-right: 1px solid #dfdfdf; flex: none; }
.ribbon button:disabled { color: #b9b9b9; }
.tool { flex-direction: column; justify-content: flex-start; width: 32px; padding-top: 3px; gap: 1px; text-align: center; }
.tool svg { width: 11px; height: 11px; }
.tool .caret { margin-top: auto; margin-bottom: 6px; border-top-color: #777; }
.tool.wide { width: 37px; }
.tool.wider { width: 52px; }
.g-sketch .tool:first-child { width: 24px; }
.g-sketch .tool:last-child { width: 37px; }
.shapes { width: 79px; display: grid; grid-template-columns: repeat(3, 21px) 14px; padding-left: 1px; align-items: center; }
.shapes button { gap: 4px; justify-content: flex-start; padding-left: 1px; }
.rows { display: flex; flex-direction: column; justify-content: space-around; width: 86px; padding-left: 2px; }
.rows button { gap: 4px; justify-content: flex-start; }
.rows .caret { margin-left: auto; margin-right: 3px; }
.rows svg { width: 9px; height: 9px; }
.g-relations .tool:last-child { width: 26px; }
.g-snap .tool { width: 40px; }
.g-rapid { border: 0; }
.g-rapid .tool { width: 25px; }
.g-rapid .instant { width: 30px; }
.g-rapid .pressed { width: 38px; background: #ababab; border: 1px solid #888; padding-top: 2px; }
.collapse { margin: auto 3px 3px auto; }
.collapse svg { width: 7px; height: 7px; }

.tab-row { display: flex; height: 11px; flex: none; justify-content: space-between; }
.tabs { display: flex; }
.tabs button, .model-tabs > button { background: #d2d2d2; border-right: 1px solid #999; border-bottom: 1px solid #aaa; }
.tabs .current, .model-tabs .current { background: #f9f9f9; border-bottom-color: transparent; font-weight: 600; }
.w28 { width: 28px; }
.w30 { width: 30px; }
.w33 { width: 33px; }
.w39 { width: 39px; }
.w46 { width: 46px; }
.w49 { width: 49px; }
.w53 { width: 53px; }
.w54 { width: 54px; }
.w60 { width: 60px; }
.w66 { width: 66px; }
.w67 { width: 67px; }
.w69 { width: 69px; }
.mdi { display: flex; align-items: flex-end; width: 70px; margin-right: 3px; color: #888; }
.mdi button { flex: 1; }
.mdi svg { width: 8px; height: 8px; }
.mirrored svg { transform: scaleX(-1); }

/* Property panel */
.work { flex: 1; display: flex; min-height: 0; }
.panel { width: 125px; flex: none; position: relative; background: #f6f6f6; border-top: 1px solid #9fb2b8; border-right: 1px solid #aaa; }
.grip { height: 10px; margin-top: 1px; margin-right: 1px; display: flex; align-items: center; justify-content: center; border-top: 1px solid #ccc; border-bottom: 1px solid #ccc; }
.grip i, .panel-handle i { width: 3px; height: 3px; border: 1px solid #999; border-radius: 50%; }
.panel-tabs { display: flex; margin-top: 1px; padding-left: 2px; border-bottom: 1px solid #bbb; }
.panel-tabs button { width: 21px; height: 13px; background: #d2d2d2; border: 1px solid #aaa; border-left: 0; border-bottom: 0; }
.panel-tabs .current { background: #f6f6f6; }
.feature { display: flex; align-items: center; height: 17px; padding: 0 7px 0 5px; gap: 3px; }
.feature h2 { flex: 1; font-weight: 600; }
.feature button { width: 10px; }
.feature button svg { width: 8px; height: 8px; }
.feature .blue { color: #216f91; }
.confirm { display: flex; height: 17px; padding: 0 0 5px 4px; gap: 5px; align-items: center; }
.green { color: #2e9c16; }
.red { color: #df2a13; }
.confirm svg { width: 9px; height: 9px; }
.block { margin: 0 4px 0 3px; border-top: 1px solid #ccc; }
.block h3 { display: flex; justify-content: space-between; align-items: center; height: 15px; padding: 0 1px 0 2px; font-weight: 600; }
.block h3 svg { width: 7px; height: 7px; color: #555; }
.b-from { height: 31px; }
.b-dir { height: 101px; }
.b-small { height: 17px; }
.field { display: flex; align-items: center; gap: 4px; padding-left: 2px; }
.field > :first-child { width: 12px; flex: none; }
.field > :last-child { width: 95px; }
.boxed { width: 12px; height: 12px; border: 1px solid #999; }
.boxed.active { background: #aaa; }
select { appearance: none; height: 11px; padding: 0 2px; border: 1px solid #ccc; border-radius: 0; outline: 0; background: #fff url("data:image/svg+xml,%3Csvg xmlns='http://www.w3.org/2000/svg' viewBox='0 0 8 8'%3E%3Cpath d='M1 2l3 3 3-3' fill='none' stroke='%23777'/%3E%3C/svg%3E") right 2px center / 5px 5px no-repeat; }
.list { height: 24px; align-items: flex-start; padding-top: 2px; }
.listbox { height: 19px; border: 1px solid #a5abb8; border-left: 7px solid #4ba3ff; background: #fff; }
.list > svg { height: 8px; margin-top: 3px; }
.spin { height: 17px; }
.field .large { height: 11px; }
.spinner { display: flex; height: 11px; border: 1px solid #bbb; background: #fff; }
.spinner input { flex: 1; min-width: 0; border: 0; padding: 0 0 0 1px; outline: 0; }
.spinner span { width: 9px; display: flex; flex-direction: column; justify-content: space-evenly; align-items: center; background: #e2e2e2; border-left: 1px solid #bbb; }
.inc, .dec { width: 0; height: 0; border: 2px solid transparent; }
.inc { border-bottom: 3px solid #444; border-top: 0; }
.dec { border-top: 3px solid #444; border-bottom: 0; }
.check { display: flex; align-items: center; gap: 2px; padding-left: 18px; height: 11px; }
input[type="checkbox"] { appearance: none; width: 7px; height: 7px; margin: 0; border: 1px solid #777; border-radius: 1px; background: #fff; }
input[type="checkbox"]:checked { border: 0; background: #0b61b6 url("data:image/svg+xml,%3Csvg xmlns='http://www.w3.org/2000/svg' viewBox='0 0 8 8'%3E%3Cpath d='M1.5 4l2 2 3-4' fill='none' stroke='white'/%3E%3C/svg%3E"); }
.b-small label { display: flex; align-items: center; gap: 3px; }
.panel-handle { position: absolute; z-index: 2; left: 124px; top: 203px; width: 5px; height: 21px; background: #f6f6f6; border: 1px solid #aaa; border-left: 0; }

/* Graphics area */
.stage { flex: 1; min-width: 0; position: relative; background: #fff; border-bottom: 1px solid #aaa; }
.model { position: absolute; width: 100%; height: 100%; }
.dimension { font: italic 7px "Liberation Sans", sans-serif; fill: #333; }
.axis { font: 5px "Liberation Sans", sans-serif; }
.tree { position: absolute; left: 3px; top: 4px; display: flex; align-items: center; gap: 2px; }
.tree svg { margin-left: 4px; }
.hud { position: absolute; left: 354px; top: 1px; height: 14px; display: flex; align-items: center; }
.hud button { width: 14px; height: 14px; }
.hud .drop { width: 21px; gap: 4px; justify-content: flex-start; padding-left: 1px; }
.hud .hidden-items { background: linear-gradient(90deg, #bbb 14px, #ddd 14px); border: 1px solid #aaa; }
.hud .faded { color: #ccc; }
.corner-ok, .corner-x { position: absolute; opacity: .25; }
.corner-ok svg { width: 16px; height: 16px; }
.corner-x svg { width: 14px; height: 14px; }
.corner-ok { right: 38px; top: 17px; color: #36a31e; }
.corner-x { right: 17px; top: 34px; color: #e3231d; }
.taskpane { position: absolute; right: 0; top: 29px; background: #d2d2d2; }
.taskpane button { width: 13px; height: 13px; border: 1px solid #aaa; border-top: 0; color: #444; }
.taskpane svg { width: 11px; height: 11px; }

/* Document tabs and selection filters */
.model-tabs { display: flex; height: 9px; flex: none; padding-left: 14px; background: #f6f6f6; }
.nav-arrows { width: 35px; display: flex; background: #aaa; }
.nav-arrows button { flex: 1; border-right: 1px solid #999; }
.nav-arrows button::after { content: ""; border: 2px solid transparent; border-left: 3px solid #888; border-right: 0; }
.nav-arrows .back::after { border-left: 0; border-right: 3px solid #888; }
.filters { height: 18px; flex: none; display: flex; align-items: center; background: #f6f6f6; border-bottom: 1px solid #ccc; }
.dots { width: 1px; height: 14px; margin: 0 2px; border-left: 1px dotted #888; }
.filter-modes { width: 84px; height: 14px; display: flex; align-items: center; justify-content: space-between; padding: 0 3px 0 4px; border-right: 1px solid #bbb; }
.off { color: #ccc; }
.purple { color: #9a35c4; }
.filter-types { width: 425px; height: 17px; padding: 0 3px 0 4px; display: flex; align-items: center; border-right: 1px solid #aaa; }
.filter-types button { flex: 1; }

.status { height: 9px; flex: none; display: flex; align-items: center; padding: 0 1px; background: #f6f6f6; white-space: nowrap; }
.product { flex: 1; }
.s-x { width: 44px; }
.s-y { width: 34px; }
.s-z { width: 25px; }
.s-def { width: 79px; }
.s-edit { width: 50px; border-right: 1px solid #ddd; }
.s-units { width: 101px; padding-left: 61px; color: #aaa; }
.status button { margin-left: 14px; }
.status svg { width: 10px; height: 9px; }
```
